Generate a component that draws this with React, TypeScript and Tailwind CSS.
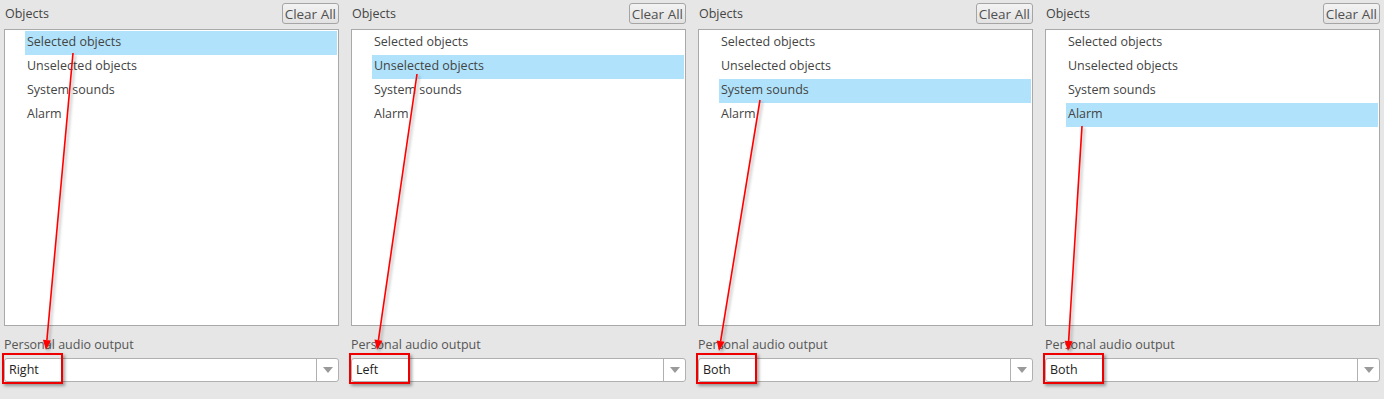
import React from "react";

const items = ["Selected objects", "Unselected objects", "System sounds", "Alarm"];

const panels = [
  { selected: 0, output: "Right" },
  { selected: 1, output: "Left" },
  { selected: 2, output: "Both" },
  { selected: 3, output: "Both" },
];

// annotation arrows: [x1, y1, x2, y2]
const arrows = [
  [73, 53, 46, 350],
  [417, 74, 377, 350],
  [760, 100, 719, 351],
  [1082, 126, 1068, 351],
];

const Panel = ({ selected, output }: { selected: number; output: string }) => {
  return (
    <div className="flex w-[335px] flex-col">
      <div className="flex h-[29px] items-start justify-between">
        <span className="pl-[1px] pt-[6px] text-[12.5px] leading-[16px] text-[#444]">Objects</span>
        <button className="mt-[3px] h-[21px] rounded-[3px] border border-[#a5a5a5] bg-gradient-to-b from-[#f3f3f3] to-[#e2e2e2] px-[2px] text-[13.5px] leading-[18px] text-[#505050]">
          Clear All
        </button>
      </div>
      <div className="h-[297px] border border-[#a9a9a9] bg-white pl-[20px] pr-[1px] pt-[1px]">
        {items.map((item, i) => (
          <div
            key={item}
            className={
              "flex h-[24px] items-center pb-[2px] pl-[2px] text-[12.5px] text-[#444] " +
              (i === selected ? "bg-[#b0e3fb]" : "")
            }
          >
            {item}
          </div>
        ))}
      </div>
      <div className="pt-[11px] text-[12.5px] leading-[16px] text-[#555]">Personal audio output</div>
      <div className="relative mt-[5px] flex h-[24px] rounded-[3px] border border-[#b0b0b0] bg-white">
        <div className="flex flex-1 items-center px-[4px] text-[12.5px] text-[#222]">{output}</div>
        <div className="flex w-[22px] items-center justify-center border-l border-[#b0b0b0]">
          <div className="h-0 w-0 border-x-[5px] border-t-[6px] border-x-transparent border-t-[#9a9a9a]" />
        </div>
        <div className="absolute left-[-3px] top-[-6px] h-[31px] w-[61px] border-2 border-[#ee0000] shadow-[2px_2px_3px_rgba(0,0,0,0.35)]" />
      </div>
    </div>
  );
};

const App = () => {
  return (
    <div className="relative h-[399px] w-[1384px] overflow-hidden bg-[#e6e6e6] font-['Open_Sans',sans-serif]">
      <div className="flex gap-[12px] px-[4px]">
        {panels.map((p, i) => (
          <Panel key={i} selected={p.selected} output={p.output} />
        ))}
      </div>
      <svg className="pointer-events-none absolute left-0 top-0" width="1384" height="399">
        <defs>
          <filter id="sh" x="-50%" y="-10%" width="200%" height="120%">
            <feDropShadow dx="2" dy="2" stdDeviation="1.5" floodColor="#000" floodOpacity="0.3" />
          </filter>
        </defs>
        {arrows.map(([x1, y1, x2, y2], i) => {
          const dx = x2 - x1;
          const dy = y2 - y1;
          const len = Math.sqrt(dx * dx + dy * dy);
          const ux = dx / len;
          const uy = dy / len;
          const bx = x2 - ux * 10;
          const by = y2 - uy * 10;
          const px = -uy * 4;
          const py = ux * 4;
          return (
            <g key={i} filter="url(#sh)">
              <line x1={x1} y1={y1} x2={bx} y2={by} stroke="#ff0000" strokeWidth="1.6" />
              <polygon points={`${x2},${y2} ${bx + px},${by + py} ${bx - px},${by - py}`} fill="#ff0000" />
            </g>
          );
        })}
      </svg>
    </div>
  );
};

export default App;
